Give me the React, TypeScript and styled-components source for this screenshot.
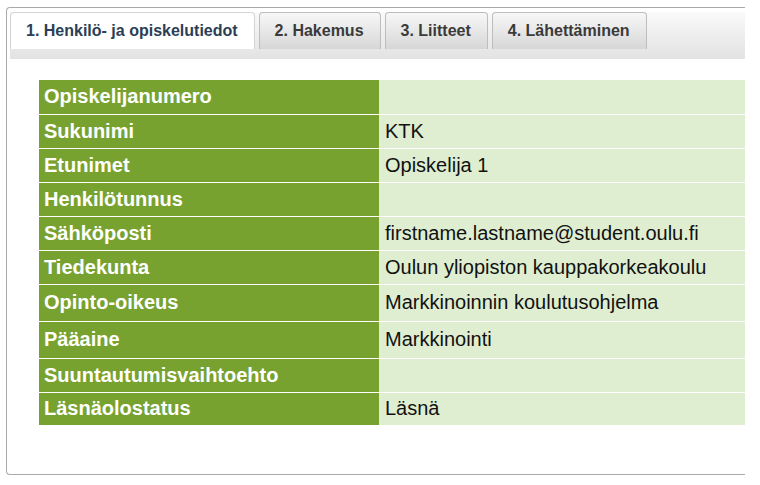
import React from 'react';
import styled, { createGlobalStyle } from 'styled-components';

const GlobalStyle = createGlobalStyle`
  body {
    margin: 0;
    background: #fff;
    font-family: 'Liberation Sans', Arial, sans-serif;
  }
`;

const Page = styled.div`
  width: 760px;
  height: 485px;
  padding: 7px 0 0 6px;
  box-sizing: border-box;
`;

const Panel = styled.div`
  width: 739px;
  height: 468px;
  box-sizing: border-box;
  border: 1px solid #aaa;
  border-right: none;
  border-radius: 4px 0 0 4px;
  padding: 4px 0 0 3px;
`;

const TabBar = styled.ul`
  list-style: none;
  margin: 0;
  padding: 0 0 10px 0;
  display: flex;
  gap: 4px;
  background: linear-gradient(#fafafa, #e8e8e8 75%, #e3e3e3);
`;

const Tab = styled.li<{ $active?: boolean }>`
  height: 37px;
  box-sizing: border-box;
  padding: 0 16px 0 15px;
  display: flex;
  align-items: center;
  font-size: 16px;
  font-weight: bold;
  border: 1px solid ${(p) => (p.$active ? '#d4d4d4' : '#bdbdbd')};
  border-bottom: none;
  border-radius: 4px 4px 0 0;
  color: ${(p) => (p.$active ? '#2b3e55' : '#3a3a3a')};
  background: ${(p) =>
    p.$active ? '#fff' : 'linear-gradient(#f7f7f7, #e4e4e4 60%, #d6d6d6)'};
`;

const Content = styled.div`
  padding: 21px 0 0 29px;
`;

const InfoTable = styled.table`
  width: 706px;
  border-collapse: collapse;
  font-size: 20px;
`;

const Row = styled.tr<{ $tall?: boolean }>`
  height: ${(p) => (p.$tall ? 37 : 34)}px;
  border-bottom: 1px solid #fff;
  &:last-child {
    border-bottom: none;
    height: 33px;
  }
`;

const Label = styled.th`
  width: 340px;
  box-sizing: border-box;
  padding: 0 5px;
  text-align: left;
  font-weight: bold;
  color: #fff;
  background: #78a22f;
`;

const Value = styled.td`
  padding: 0 6px;
  color: #111;
  background: #dfeed0;
`;

const tabs = [
  '1. Henkilö- ja opiskelutiedot',
  '2. Hakemus',
  '3. Liitteet',
  '4. Lähettäminen',
];

const rows: { label: string; value: string; tall?: boolean }[] = [
  { label: 'Opiskelijanumero', value: '' },
  { label: 'Sukunimi', value: 'KTK' },
  { label: 'Etunimet', value: 'Opiskelija 1' },
  { label: 'Henkilötunnus', value: '' },
  { label: 'Sähköposti', value: 'firstname.lastname@student.oulu.fi' },
  { label: 'Tiedekunta', value: 'Oulun yliopiston kauppakorkeakoulu' },
  { label: 'Opinto-oikeus', value: 'Markkinoinnin koulutusohjelma', tall: true },
  { label: 'Pääaine', value: 'Markkinointi', tall: true },
  { label: 'Suuntautumisvaihtoehto', value: '' },
  { label: 'Läsnäolostatus', value: 'Läsnä' },
];

const App: React.FC = () => {
  return (
    <Page>
      <GlobalStyle />
      <Panel>
        <TabBar>
          {tabs.map((t, i) => (
            <Tab key={t} $active={i === 0}>
              {t}
            </Tab>
          ))}
        </TabBar>
        <Content>
          <InfoTable>
            <tbody>
              {rows.map((r) => (
                <Row key={r.label} $tall={r.tall}>
                  <Label>{r.label}</Label>
                  <Value>{r.value}</Value>
                </Row>
              ))}
            </tbody>
          </InfoTable>
        </Content>
      </Panel>
    </Page>
  );
};

export default App;
